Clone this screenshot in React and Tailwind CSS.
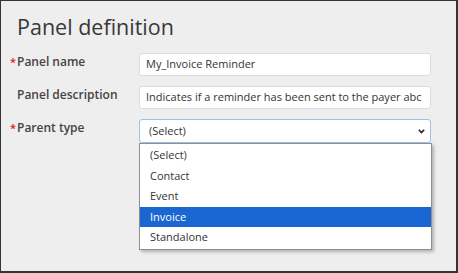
import React from "react";

const options = ["(Select)", "Contact", "Event", "Invoice", "Standalone"];

const Field = ({ label, required, children }) => (
  <div className="flex items-start">
    <div className="w-[138px] flex items-start pt-[1px] text-[12px] font-semibold text-[#444]">
      <span className="w-[16px] pr-[1px] text-right text-[#e02020] text-[11px] leading-[16px]">
        {required ? "*" : ""}
      </span>
      <span className="leading-[16px]">{label}</span>
    </div>
    {children}
  </div>
);

const App = () => {
  return (
    <div
      className="w-[458px] h-[273px] bg-[#eeeeee] border-t border-l border-r-2 border-b-2 border-[#353535] overflow-hidden"
      style={{ fontFamily: '"Open Sans", sans-serif' }}
    >
      <h1 className="pl-[16px] pt-[12px] text-[21.5px] leading-[28px] text-[#383838]">
        Panel definition
      </h1>
      <div className="mt-[12px] flex flex-col gap-[10px]">
        <Field label="Panel name" required>
          <div className="w-[292px] h-[23px] bg-white border border-[#dcdcdc] rounded-[3px] px-[6px] flex items-center text-[11px] text-[#333]">
            My_Invoice Reminder
          </div>
        </Field>
        <Field label="Panel description">
          <div className="w-[292px] h-[23px] bg-white border border-[#dcdcdc] rounded-[3px] px-[6px] flex items-center text-[11px] text-[#333] whitespace-nowrap overflow-hidden">
            Indicates if a reminder has been sent to the payer abc
          </div>
        </Field>
        <Field label="Parent type" required>
          <div className="relative">
            <div className="w-[292px] h-[24px] bg-white border border-[#9cc2e8] rounded-[3px] pl-[9px] pr-[5px] flex items-center justify-between text-[11px] text-[#333]">
              <span>(Select)</span>
              <svg width="7" height="5" viewBox="0 0 7 5">
                <path d="M0.8 0.8 L3.5 3.6 L6.2 0.8" fill="none" stroke="#222" strokeWidth="1.6" />
              </svg>
            </div>
            <div className="absolute left-0 top-[24px] w-[293px] bg-white border border-[#8f8f8f] shadow-[2px_2px_3px_rgba(0,0,0,0.25)] py-[1px]">
              {options.map((o) => (
                <div
                  key={o}
                  className={
                    o === "Invoice"
                      ? "h-[20.6px] flex items-center pl-[10px] text-[11px] bg-[#1a66d2] text-white"
                      : "h-[20.6px] flex items-center pl-[10px] text-[11px] text-[#333]"
                  }
                >
                  {o}
                </div>
              ))}
            </div>
          </div>
        </Field>
      </div>
    </div>
  );
};

export default App;
